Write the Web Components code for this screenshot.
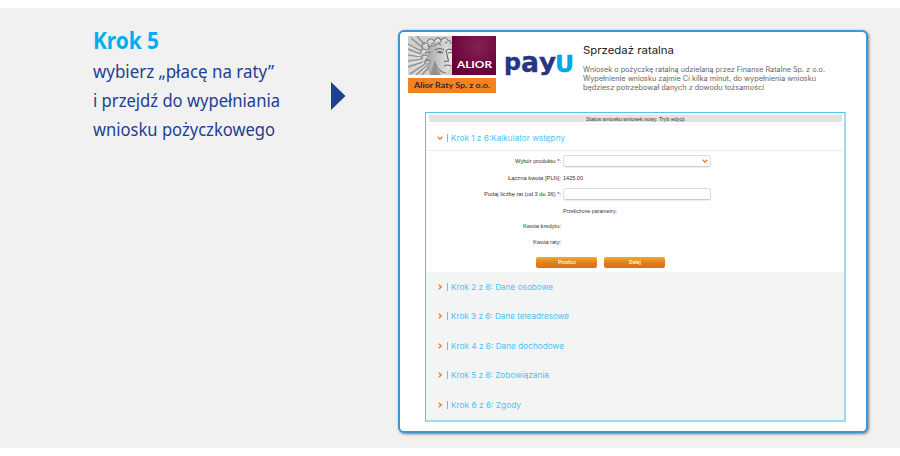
<!DOCTYPE html>
<html lang="pl">
<head>
<meta charset="utf-8">
<title>Krok 5</title>
<style>
html, body { margin: 0; height: 100%; background: #fff; }
</style>
</head>
<body>
<guide-page></guide-page>

<template id="t-guide-page">
  <style>
    :host { display: block; box-sizing: border-box; height: 456px; padding: 8px 0; background: #fff; }
    main { height: 440px; background: #f1f1f1; display: flex; align-items: flex-start; }
    step-note { margin: 16px 0 0 93px; width: 238px; }
    .arrow { margin-top: 74px; width: 15px; height: 28px; display: block; }
    app-card { margin: 22px 0 0 52px; }
  </style>
  <main>
    <step-note>
      <fit-text slot="title" w="66">Krok 5</fit-text>
      <fit-text w="181">wybierz „płacę na raty”</fit-text>
      <fit-text w="187">i przejdź do wypełniania</fit-text>
      <fit-text w="182">wniosku pożyczkowego</fit-text>
    </step-note>
    <svg class="arrow" viewBox="0 0 15 28"><path d="M0 0L14.5 14L0 28Z" fill="#1d3f94"/></svg>
    <app-card></app-card>
  </main>
</template>

<template id="t-step-note">
  <style>
    :host { display: flex; flex-direction: column; font: 18.5px/29px "Noto Sans", sans-serif; color: #1d3f94; }
    .title { font-size: 23.5px; line-height: 33px; height: 32px; font-weight: 700; color: #00aeef; }
    .lines { display: flex; flex-direction: column; align-items: flex-start; }
  </style>
  <div class="title"><slot name="title"></slot></div>
  <div class="lines"><slot></slot></div>
</template>

<template id="t-app-card">
  <style>
    :host { display: block; box-sizing: border-box; width: 470px; height: 403px; border: 2px solid #3b97dc; border-radius: 6px;
      background: #fff; box-shadow: 1px 1px 3px rgba(0,0,0,.5); font-family: Inter, sans-serif; }
    header { display: flex; height: 80px; align-items: flex-start; }
    alior-logo { margin: 4px 0 0 8px; }
    payu-logo { margin: 19px 0 0 8px; }
    .copy { margin: 10px 0 0 9px; display: flex; flex-direction: column; color: #666; font-size: 7px; line-height: 9px; }
    .copy .h { font-size: 10.6px; line-height: 17px; margin-bottom: 6px; color: #222; }
    loan-form { margin-left: 25px; }
  </style>
  <header>
    <alior-logo></alior-logo>
    <payu-logo></payu-logo>
    <div class="copy">
      <fit-text class="h" w="91">Sprzedaż ratalna</fit-text>
      <fit-text w="242">Wniosek o pożyczkę ratalną udzielaną przez Finanse Ratalne Sp. z o.o.</fit-text>
      <fit-text w="233">Wypełnienie wniosku zajmie Ci kilka minut, do wypełnienia wniosku</fit-text>
      <fit-text w="181">będziesz potrzebował danych z dowodu tożsamości</fit-text>
    </div>
  </header>
  <loan-form></loan-form>
</template>

<template id="t-alior-logo">
  <style>
    :host { display: flex; flex-direction: column; gap: 3px; width: 88px; }
    .top { display: flex; height: 39px; }
    svg { width: 44px; height: 39px; display: block; }
    .brand { flex: 1; display: flex; justify-content: flex-end; align-items: flex-end; box-sizing: border-box; padding: 0 4px 4px 0; background: radial-gradient(circle at 60% 25%, #84224f, #650038 80%);
      font: 700 10px/13px Lato, sans-serif; color: #fff; }
    .sub { height: 15px; background: #f58220; display: flex; justify-content: center; font: 700 8px/15px Lato, sans-serif; color: #3b2622; }
  </style>
  <div class="top">
    <svg viewBox="0 0 44 39">
      <defs><linearGradient id="f"><stop offset="0" stop-color="#a5a5a5"/><stop offset="1" stop-color="#e8e8e8"/></linearGradient></defs>
      <rect width="44" height="39" fill="#cfcfcf"/>
      <path d="M21 11C26 5 39 5 42 13L44 18V27L41 34L37 39H22L18 27Z" fill="url(#f)"/>
      <path d="M27 24L22 39H33L29 33Z" fill="#929292"/>
      <g fill="none" stroke="#8a8a8a" stroke-width="1.2">
        <path d="M0 8L13 15M0 13L13 18M0 19L13 21M0 25L14 23M0 31L15 26M2 38L17 28M8 39L19 29M14 39L21 31M3 2L15 12M9 0L17 9"/>
      </g>
      <g fill="none" stroke="#e8e8e8" stroke-width=".9">
        <path d="M0 10L12 16M0 16L12 20M0 22L12 22M0 28L14 25M0 35L16 27M5 39L18 29"/>
      </g>
      <g fill="none" stroke="#7c7c7c" stroke-width="1.1">
        <path d="M14 11Q14 6 18 7T20 11M19 6Q22 1 25 4T23 8M26 5Q29 0 32 3T30 7M33 4Q37 0 39 3T37 7M39 5Q43 3 43 8M13 17Q12 12 16 13T17 17M20 14Q21 9 25 10M26 10Q30 6 33 9M14 23Q13 18 17 19T18 23M18 18Q21 14 23 17M17 28Q16 23 20 24T21 28"/>
      </g>
      <g fill="none" stroke="#f4f4f4" stroke-width=".9">
        <path d="M16 10Q17 7 19 9M21 6Q24 2 25 6M28 5Q31 2 32 6M35 5Q38 2 40 6M15 16Q17 13 18 16M16 22Q18 19 20 22M19 27Q21 24 22 27"/>
      </g>
      <path d="M27 14Q32 11 36 14M39 14Q42 12 44 14M29 16.5Q32 14.5 35 17M40 17L44 16.5M38 14L39.5 21L40.5 25L36 25.5M36 30Q40 28 43 30" fill="none" stroke="#666" stroke-width="1.1"/>
      <path d="M27 27Q30 36 38 37" fill="none" stroke="#888" stroke-width="1.2"/>
      <circle cx="32" cy="16.5" r="1" fill="#555"/>
    </svg>
    <div class="brand"><fit-text w="35">ALIOR</fit-text></div>
  </div>
  <div class="sub"><fit-text w="76">Alior Raty Sp. z o.o.</fit-text></div>
</template>

<template id="t-payu-logo">
  <style>
    :host { display: flex; align-items: flex-start; width: 70px; font: 700 23px/24px "DejaVu Sans", sans-serif; color: #283583; -webkit-text-stroke: .4px currentColor; }
    .low { margin-top: -1px; }
    .a { font-size: 28px; }
    .u { color: #00a7e5; margin-top: 1px; -webkit-text-stroke-color: #00a7e5; }
  </style>
  <fit-text class="low" w="17">p</fit-text><fit-text class="a" w="18">a</fit-text><fit-text class="low" w="17">y</fit-text><fit-text class="u" w="19">U</fit-text>
</template>

<template id="t-loan-form">
  <style>
    :host { display: flex; flex-direction: column; box-sizing: border-box; width: 421px; height: 310px; border: 1px solid #56c4ee; border-right: 2px solid #9bdcf7; border-bottom: 2px solid #9bdcf7;
      font: 6px/8px "Liberation Sans", sans-serif; color: #333; }
    .status { margin: 2px 2px 0 3px; height: 7px; background: #e2e3e5; display: flex; justify-content: center; line-height: 8px; }
    .first { margin-top: 2px; border-top: 1px solid #f5f5f5; border-bottom: 1px solid #ececec; height: 28px; padding-top: 1px; box-sizing: border-box; }
    .rows { display: grid; grid-template-columns: 135px 148px; column-gap: 2px; grid-template-rows: 21px 12px 21px 12px 18px 14px; align-items: center; padding: 0; }
    .rows .l { justify-self: end; }
    .input { box-sizing: border-box; height: 12px; border: 1px solid #ddd; border-bottom-color: #ccc; border-radius: 3px; background: #fff; box-shadow: 0 1px 1px #eee; display: flex; justify-content: flex-end; align-items: center; padding-right: 2px; }
    .buttons { display: flex; gap: 7px; margin: 8px 0 0 110px; height: 16px; }
    .steps { flex: 1; background: #f3f5f5; display: grid; grid-template-rows: 29px 29px 30px 29px 31px; }
  </style>
  <div class="status"><fit-text w="100">Status wniosku:wniosek nowy. Tryb edycji.</fit-text></div>
  <step-head class="first" open><fit-text w="114">Krok 1 z 6:Kalkulator wstępny</fit-text></step-head>
  <div class="rows">
    <fit-text class="l" w="46">Wybór produktu *:</fit-text><div class="input"><chevron-mark down></chevron-mark></div>
    <fit-text class="l" w="53">Łączna kwota [PLN]:</fit-text><fit-text w="20">1425.00</fit-text>
    <fit-text class="l" w="77">Podaj liczbę rat (od 3 do 36) *:</fit-text><div class="input"></div>
    <span></span><fit-text w="54">Przeliczone parametry:</fit-text>
    <fit-text class="l" w="38">Kwota kredytu:</fit-text><span></span>
    <fit-text class="l" w="28">Kwota raty:</fit-text><span></span>
  </div>
  <div class="buttons">
    <action-button><fit-text w="18">Przelicz</fit-text></action-button>
    <action-button><fit-text w="12">Dalej</fit-text></action-button>
  </div>
  <div class="steps">
    <step-head><fit-text w="102">Krok 2 z 6: Dane osobowe</fit-text></step-head>
    <step-head><fit-text w="118">Krok 3 z 6: Dane teleadresowe</fit-text></step-head>
    <step-head><fit-text w="113">Krok 4 z 6: Dane dochodowe</fit-text></step-head>
    <step-head><fit-text w="98">Krok 5 z 6: Zobowiązania</fit-text></step-head>
    <step-head><fit-text w="70">Krok 6 z 6: Zgody</fit-text></step-head>
  </div>
</template>

<template id="t-step-head">
  <style>
    :host { display: flex; align-items: center; padding: 1px 0 0 11px; font: 8px/10px Inter, sans-serif; color: #50c0f0; }
    .bar { width: 1px; height: 8px; background: #aaa; margin: 0 3px 0 4px; }
  </style>
  <chevron-mark></chevron-mark><i class="bar"></i><slot></slot>
</template>

<template id="t-chevron-mark">
  <style>
    :host { display: block; width: 6px; height: 6px; }
    :host([down]) svg { transform: rotate(90deg); }
    svg { display: block; width: 6px; height: 6px; }
  </style>
  <svg viewBox="0 0 6 6"><path d="M1.8 .7L4.2 3L1.8 5.3" fill="none" stroke="#f0803c" stroke-width="1.5"/></svg>
</template>

<template id="t-action-button">
  <style>
    :host { display: flex; justify-content: center; width: 61px; height: 11px; border-radius: 2px; background: linear-gradient(#efae26, #e07c1c 55%, #dd6f16); color: #fff3e0; font: 700 5px/11px "Liberation Sans", sans-serif; }
  </style>
  <slot></slot>
</template>

<template id="t-fit-text">
  <style>
    :host { display: block; white-space: nowrap; text-align: left; }
    span { display: inline-block; transform-origin: 0 50%; vertical-align: top; }
  </style>
  <span><slot></slot></span>
</template>

<script>
function define(name, after) {
  customElements.define(name, class extends HTMLElement {
    connectedCallback() {
      if (this.shadowRoot) return;
      this.attachShadow({ mode: 'open' }).append(document.getElementById('t-' + name).content.cloneNode(true));
      if (after) after(this);
    }
  });
}
define('chevron-mark');
define('step-head', el => {
  if (el.hasAttribute('open')) el.shadowRoot.querySelector('chevron-mark').setAttribute('down', '');
});
define('action-button');
define('loan-form');
define('payu-logo');
define('alior-logo');
define('app-card');
define('step-note');
define('guide-page');
// Scales a single line of text horizontally to the width given in the "w" attribute.
define('fit-text', el => {
  const width = Number(el.getAttribute('w'));
  const span = el.shadowRoot.querySelector('span');
  const natural = span.getBoundingClientRect().width;
  el.style.width = width + 'px';
  if (natural) span.style.transform = `scaleX(${width / natural})`;
});
</script>
</body>
</html>
